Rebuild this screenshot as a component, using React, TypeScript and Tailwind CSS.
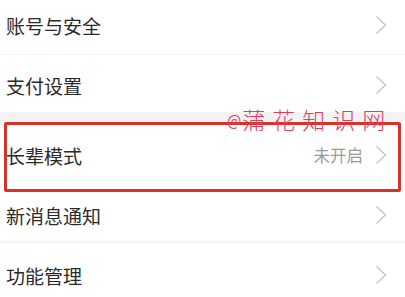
const Chevron = () => (
  <svg width="12" height="20" viewBox="0 0 12 20" fill="none" className="shrink-0">
    <polyline points="1.5,1.5 10.5,10 1.5,18.5" stroke="#c6c6c6" strokeWidth="1.4" strokeLinejoin="miter" />
  </svg>
)

function Row({ label, value, className }: { label: string; value?: string; className: string }) {
  return (
    <div className={`flex items-center justify-between pl-[6px] pr-[18px] ${className}`}>
      <span className="text-[19px] leading-none text-[#2a2a2a]">{label}</span>
      <div className="flex items-center gap-[12px]">
        {value && <span className="text-[16.5px] leading-none text-[#9a9a9a]">{value}</span>}
        <Chevron />
      </div>
    </div>
  )
}

export default function App() {
  return (
    <div
      className="relative h-[297px] w-[405px] overflow-hidden bg-white"
      style={{ fontFamily: '"Noto Sans CJK SC", "Noto Sans", sans-serif' }}
    >
      <Row label="账号与安全" className="h-[54px] pb-[4px]" />
      <div className="h-[1px] bg-[#f5f5f5]" />
      <Row label="支付设置" className="h-[57px] pt-[3px]" />
      <div className="h-[9px] bg-[#f3f3f3]" />
      <div className="relative">
        <Row label="长辈模式" value="未开启" className="h-[65px] pt-[3px]" />
        <div className="pointer-events-none absolute left-[4px] right-[4px] top-[1px] h-[70px] rounded-[2px] border-[3px] border-[#d8302b]" />
      </div>
      <Row label="新消息通知" className="h-[55px] pt-[3px]" />
      <div className="h-[2px] bg-[#f5f5f5]" />
      <Row label="功能管理" className="h-[60px] pt-[4px]" />

      <div className="absolute left-[227px] top-[108px] flex items-end text-[#ea3a5c]">
        <span className="mb-[4px] text-[15px] leading-none">@</span>
        <span className="ml-[1px] text-[23px] font-light leading-none tracking-[7px]">蒲花知识网</span>
      </div>
    </div>
  )
}
